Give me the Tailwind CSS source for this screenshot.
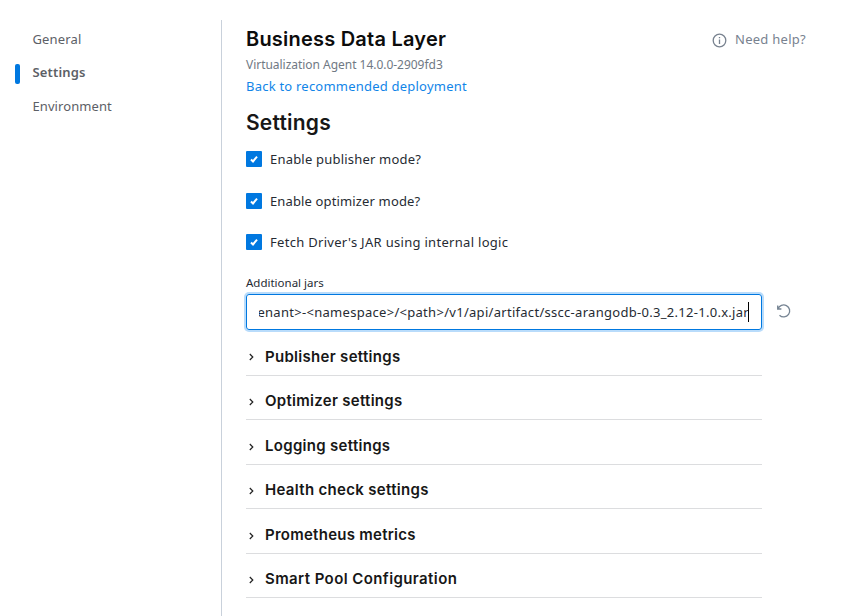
<!DOCTYPE html>
<html lang="en"><head><meta charset="utf-8"><title>Business Data Layer</title>
<script src="https://cdn.jsdelivr.net/npm/@tailwindcss/browser@4"></script></head>
<body class="bg-white h-[616px] overflow-hidden font-['Noto_Sans',sans-serif] text-[13px] whitespace-nowrap text-[#262b33]">
<div class="flex h-full pt-5">
<nav class="w-[222px] shrink-0 border-r border-[#c9d1db] pl-[15px] pt-[3px] text-[#5c6066]">
<a class="flex items-center h-[33px] pl-[17.5px] tracking-[0.15px]">General</a>
<a class="flex items-center h-[33px] font-semibold tracking-[0.15px]"><i class="w-[5px] h-5 mt-[3px] rounded-[2px] bg-[#0078e0] mr-[12.5px]"></i>Settings</a>
<a class="flex items-center h-[35px] pl-[17.5px] tracking-[0.08px]">Environment</a>
</nav>
<main class="w-[560px] pl-6">
<header class="flex justify-between h-[38px]"><h1 class="font-['Inter',sans-serif] font-semibold text-[20px] leading-[38px] tracking-[0.22px] text-[#0c0c0c]">Business Data Layer</h1>
<div class="flex items-center gap-2 h-10 text-[#78828f] -mr-6 tracking-[0.27px]"><svg class="size-[15px]" viewBox="0 0 15 15" fill="none" stroke="currentColor" stroke-width="1.3"><circle cx="7.5" cy="7.5" r="6.3"/><path d="M7.5 6.5V11M7.5 4v1.3"/></svg>Need help?</div></header>
<p class="h-4 text-[12px] leading-[14px] tracking-[-0.03px] text-[#707984]">Virtualization Agent 14.0.0-2909fd3</p>
<a class="block h-6 leading-6 tracking-[0.22px] text-[#1185e8]">Back to recommended deployment</a>
<h2 class="font-['Inter',sans-serif] font-semibold text-[21px] h-[53px] leading-[50px] tracking-[0.2px] text-[#171717]">Settings</h2>
<label class="flex items-start gap-2 h-[42px] leading-4 tracking-[0.2px]"><svg class="size-4" viewBox="0 0 16 16"><rect width="16" height="16" rx="1" fill="#0078e0"/><path d="M5 8.5l2 2 4-4.8" fill="none" stroke="#fff" stroke-width="2"/></svg>Enable publisher mode?</label>
<label class="flex items-start gap-2 h-[41px] leading-4 tracking-[0.14px]"><svg class="size-4" viewBox="0 0 16 16"><rect width="16" height="16" rx="1" fill="#0078e0"/><path d="M5 8.5l2 2 4-4.8" fill="none" stroke="#fff" stroke-width="2"/></svg>Enable optimizer mode?</label>
<label class="flex items-start gap-2 h-[40px] leading-4 tracking-[0.3px]"><svg class="size-4" viewBox="0 0 16 16"><rect width="16" height="16" rx="1" fill="#0078e0"/><path d="M5 8.5l2 2 4-4.8" fill="none" stroke="#fff" stroke-width="2"/></svg>Fetch Driver's JAR using internal logic</label>
<div class="h-5 leading-[18px] text-[11.5px]">Additional jars</div>
<div class="flex gap-[14px] items-center w-[550px] h-9"><div class="w-[516px] h-9 shrink-0 rounded-[3px] border border-[#0078e0] ring-2 ring-[#b9dcfb] flex items-center px-3"><div class="w-[490px] h-5 leading-5 overflow-hidden flex justify-end border-r border-black tracking-[0.29px]"><span class="-mr-px">tenant&gt;-&lt;namespace&gt;/&lt;path&gt;/v1/api/artifact/sscc-arangodb-0.3_2.12-1.0.x.jar</span></div></div>
<svg class="size-4 shrink-0 -mt-[2px]" viewBox="0 0 16 16" fill="none" stroke="#768493" stroke-width="1.3"><path d="M1.7 2.5V6h3.7M2 6a6 6 0 1 1 1.5 6.2"/></svg></div>
<section class="w-[516px] font-['Inter',sans-serif] text-[15px] font-semibold text-[#171717]">
<div class="flex items-center gap-[11px] h-[46px] pl-[3px] pt-[9px] border-b border-[#dcdddf] tracking-[0.3px]"><svg class="w-[5px] h-2" viewBox="0 0 5 8" fill="none" stroke="#222" stroke-width="1.2"><path d="M.8 1l3 3-3 3"/></svg>Publisher settings</div>
<div class="flex items-center gap-[11px] h-[44px] pl-[3px] pt-[8px] border-b border-[#dcdddf] tracking-[0.29px]"><svg class="w-[5px] h-2" viewBox="0 0 5 8" fill="none" stroke="#222" stroke-width="1.2"><path d="M.8 1l3 3-3 3"/></svg>Optimizer settings</div>
<div class="flex items-center gap-[11px] h-[45px] pl-[3px] pt-[9px] border-b border-[#dcdddf] tracking-[0.3px]"><svg class="w-[5px] h-2" viewBox="0 0 5 8" fill="none" stroke="#222" stroke-width="1.2"><path d="M.8 1l3 3-3 3"/></svg>Logging settings</div>
<div class="flex items-center gap-[11px] h-[44px] pl-[3px] pt-[8px] border-b border-[#dcdddf] tracking-[0.32px]"><svg class="w-[5px] h-2" viewBox="0 0 5 8" fill="none" stroke="#222" stroke-width="1.2"><path d="M.8 1l3 3-3 3"/></svg>Health check settings</div>
<div class="flex items-center gap-[11px] h-[45px] pl-[3px] pt-[9px] border-b border-[#dcdddf] tracking-[0.26px]"><svg class="w-[5px] h-2" viewBox="0 0 5 8" fill="none" stroke="#222" stroke-width="1.2"><path d="M.8 1l3 3-3 3"/></svg>Prometheus metrics</div>
<div class="flex items-center gap-[11px] h-[44px] pl-[3px] pt-[8px] border-b border-[#dcdddf] tracking-[0.41px]"><svg class="w-[5px] h-2" viewBox="0 0 5 8" fill="none" stroke="#222" stroke-width="1.2"><path d="M.8 1l3 3-3 3"/></svg>Smart Pool Configuration</div>
</section>
</main></div>
</body></html>
